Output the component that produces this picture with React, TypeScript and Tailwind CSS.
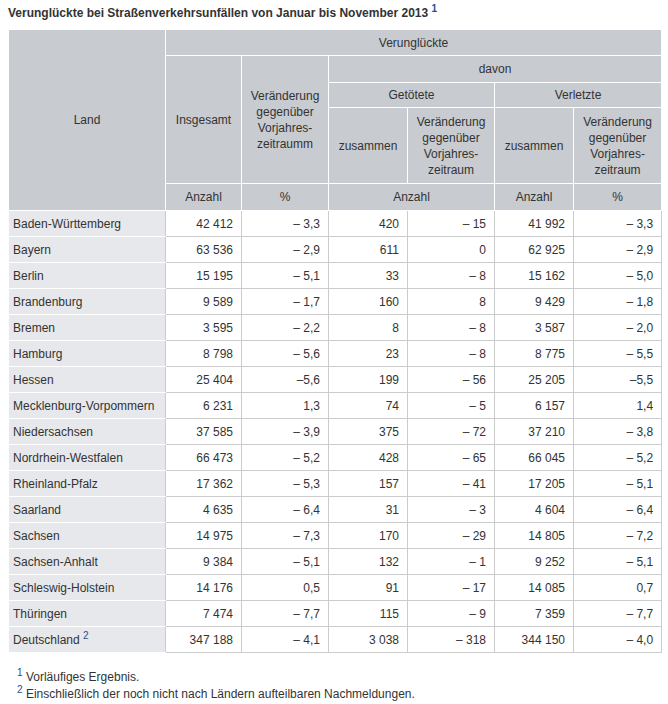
const rows: [string, string, string, string, string, string, string][] = [
  ["Baden-Württemberg", "42 412", "– 3,3", "420", "– 15", "41 992", "– 3,3"],
  ["Bayern", "63 536", "– 2,9", "611", "0", "62 925", "– 2,9"],
  ["Berlin", "15 195", "– 5,1", "33", "– 8", "15 162", "– 5,0"],
  ["Brandenburg", "9 589", "– 1,7", "160", "8", "9 429", "– 1,8"],
  ["Bremen", "3 595", "– 2,2", "8", "– 8", "3 587", "– 2,0"],
  ["Hamburg", "8 798", "– 5,6", "23", "– 8", "8 775", "– 5,5"],
  ["Hessen", "25 404", "–5,6", "199", "– 56", "25 205", "–5,5"],
  ["Mecklenburg-Vorpommern", "6 231", "1,3", "74", "– 5", "6 157", "1,4"],
  ["Niedersachsen", "37 585", "– 3,9", "375", "– 72", "37 210", "– 3,8"],
  ["Nordrhein-Westfalen", "66 473", "– 5,2", "428", "– 65", "66 045", "– 5,2"],
  ["Rheinland-Pfalz", "17 362", "– 5,3", "157", "– 41", "17 205", "– 5,1"],
  ["Saarland", "4 635", "– 6,4", "31", "– 3", "4 604", "– 6,4"],
  ["Sachsen", "14 975", "– 7,3", "170", "– 29", "14 805", "– 7,2"],
  ["Sachsen-Anhalt", "9 384", "– 5,1", "132", "– 1", "9 252", "– 5,1"],
  ["Schleswig-Holstein", "14 176", "0,5", "91", "– 17", "14 085", "0,7"],
  ["Thüringen", "7 474", "– 7,7", "115", "– 9", "7 359", "– 7,7"],
];

const th = "bg-[#c8cbcf] border border-white font-normal text-center align-middle p-0 leading-4";
const td = "border border-[#cccccc] text-right pr-2 align-middle";

export default function App() {
  return (
    <div className="bg-white text-[#333] text-[12px] px-2 pt-[5px]" style={{ fontFamily: '"Liberation Sans", Arial, sans-serif' }}>
      <h3 className="font-bold leading-4 mb-[8px]">
        Verunglückte bei Straßenverkehrsunfällen von Januar bis November 2013{" "}
        <sup className="text-[10px] text-[#1f4f8b]">1</sup>
      </h3>
      <table className="table-fixed border-collapse w-[653px]">
        <colgroup>
          <col className="w-[157px]" />
          <col className="w-[76px]" />
          <col className="w-[87px]" />
          <col className="w-[79px]" />
          <col className="w-[87px]" />
          <col className="w-[79px]" />
          <col className="w-[88px]" />
        </colgroup>
        <thead>
          <tr className="h-[26px]">
            <th rowSpan={5} className={th}>Land</th>
            <th colSpan={6} className={th}>Verunglückte</th>
          </tr>
          <tr className="h-[27px]">
            <th rowSpan={3} className={th}>Insgesamt</th>
            <th rowSpan={3} className={th}>
              Veränderung<br />gegenüber<br />Vorjahres-<br />zeitraumm
            </th>
            <th colSpan={4} className={th}>davon</th>
          </tr>
          <tr className="h-[25px]">
            <th colSpan={2} className={th}>Getötete</th>
            <th colSpan={2} className={th}>Verletzte</th>
          </tr>
          <tr className="h-[76px]">
            <th className={th}>zusammen</th>
            <th className={th}>
              Veränderung<br />gegenüber<br />Vorjahres-<br />zeitraum
            </th>
            <th className={th}>zusammen</th>
            <th className={th}>
              Veränderung<br />gegenüber<br />Vorjahres-<br />zeitraum
            </th>
          </tr>
          <tr className="h-[27px]">
            <th className={th}>Anzahl</th>
            <th className={th}>%</th>
            <th colSpan={2} className={th}>Anzahl</th>
            <th className={th}>Anzahl</th>
            <th className={th}>%</th>
          </tr>
        </thead>
        <tbody>
          {rows.map((r) => (
            <tr key={r[0]} className="h-[26px]">
              <td className="bg-[#e6e8eb] border border-white border-r-[#cccccc] pl-1 text-left">{r[0]}</td>
              {r.slice(1).map((v, i) => (
                <td key={i} className={td}>{v}</td>
              ))}
            </tr>
          ))}
          <tr className="h-[26px]">
            <td className="bg-[#e6e8eb] border border-white border-r-[#cccccc] pl-1 text-left">
              Deutschland <sup className="text-[10px] text-[#1f4f8b]">2</sup>
            </td>
            {["347 188", "– 4,1", "3 038", "– 318", "344 150", "– 4,0"].map((v, i) => (
              <td key={i} className={td}>{v}</td>
            ))}
          </tr>
        </tbody>
      </table>
      <div className="pl-[9px] pt-[16px] leading-[17px]">
        <p><sup className="text-[10px] text-[#1f4f8b]">1</sup> Vorläufiges Ergebnis.</p>
        <p><sup className="text-[10px] text-[#1f4f8b]">2</sup> Einschließlich der noch nicht nach Ländern aufteilbaren Nachmeldungen.</p>
      </div>
    </div>
  );
}
